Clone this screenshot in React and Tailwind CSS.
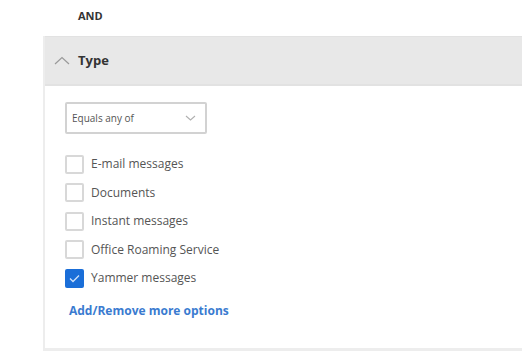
import React from 'react';

const options = [
  { label: 'E-mail messages', checked: false },
  { label: 'Documents', checked: false },
  { label: 'Instant messages', checked: false },
  { label: 'Office Roaming Service', checked: false },
  { label: 'Yammer messages', checked: true },
];

export default function App() {
  return (
    <div className="w-[522px] h-[360px] overflow-hidden bg-white text-[#323130]" style={{ fontFamily: '"Open Sans", "Noto Sans", sans-serif' }}>
      <div className="h-[36px] pl-[78px] pt-[8px] text-[11px] font-bold text-[#333]">AND</div>

      <div className="ml-[43px] border-l-2 border-b-[3px] border-[#ededed]">
        <div className="h-[50px] bg-[#e8e8e8] border-t border-b-2 border-[#e2e2e2] flex items-center pl-[9px] gap-[8px]">
          <svg width="16" height="9" viewBox="0 0 16 9" fill="none">
            <path d="M1 8 L8 1.5 L15 8" stroke="#9a9a9a" strokeWidth="1.2" />
          </svg>
          <span className="text-[13px] font-bold text-[#333]">Type</span>
        </div>

        <div className="h-[262px] pl-[20px] pt-[16px]">
          <div className="w-[142px] h-[32px] border-2 border-[#d2d2d2] rounded-[2px] flex items-center justify-between pl-[5px] pr-[9px]">
            <span className="text-[10px] text-[#555]">Equals any of</span>
            <svg width="11" height="6" viewBox="0 0 11 6" fill="none">
              <path d="M1 1 L5.5 5 L10 1" stroke="#b0b0b0" strokeWidth="1.1" />
            </svg>
          </div>

          <div className="mt-[20px] flex flex-col gap-[8.5px]">
            {options.map((o) => (
              <div key={o.label} className="flex items-center gap-[7px] h-[20px]">
                {o.checked ? (
                  <div className="w-[19px] h-[19px] rounded-[2px] bg-[#1a6ed8] flex items-center justify-center">
                    <svg width="11" height="9" viewBox="0 0 11 9" fill="none">
                      <path d="M1 4.5 L4 7.5 L10 1.5" stroke="#cfe2fb" strokeWidth="1.3" />
                    </svg>
                  </div>
                ) : (
                  <div className="w-[19px] h-[19px] rounded-[2px] border-2 border-[#d8d8d8] bg-white" />
                )}
                <span className="text-[12px] text-[#555]">{o.label}</span>
              </div>
            ))}
          </div>

          <div className="mt-[14px] pl-[4px] text-[12px] font-bold text-[#3a7bd0]">Add/Remove more options</div>
        </div>
      </div>
    </div>
  );
}
